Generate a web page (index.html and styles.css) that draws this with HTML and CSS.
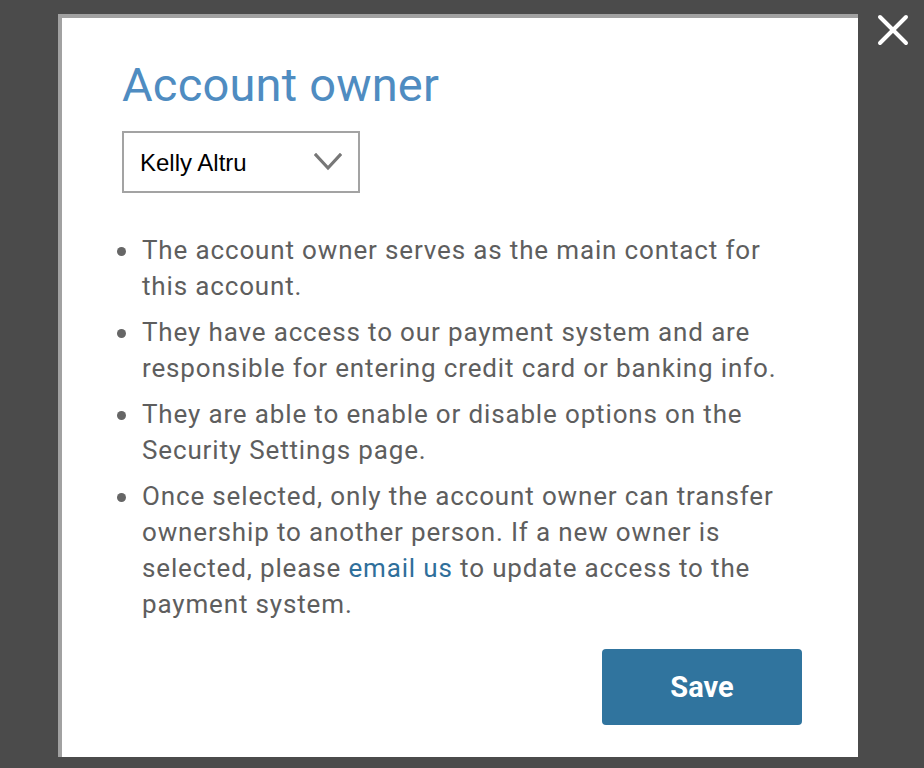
FILE: index.html
```html
<!DOCTYPE html>
<html lang="en">
<head>
<meta charset="utf-8">
<title>Account owner</title>
<link rel="stylesheet" href="styles.css">
</head>
<body>
<div class="overlay">
  <div class="modal">
    <h1 class="title">Account owner</h1>
    <div class="select">
      <span class="select-value">Kelly Altru</span>
      <svg class="chevron" width="28" height="18" viewBox="0 0 28 18" aria-hidden="true">
        <polyline points="2,2 14,15 26,2" fill="none" stroke="#777" stroke-width="3.2" stroke-linecap="square" stroke-linejoin="miter"/>
      </svg>
    </div>
    <ul class="info-list">
      <li><span class="item-text">The account owner serves as the main contact for this account.</span></li>
      <li><span class="item-text">They have access to our payment system and are responsible for entering credit card or banking info.</span></li>
      <li><span class="item-text">They are able to enable or disable options on the Security Settings page.</span></li>
      <li><span class="item-text">Once selected, only the account owner can transfer ownership to another person. If a new owner is selected, please <a class="link" href="#">email us</a> to update access to the payment system.</span></li>
    </ul>
    <div class="actions">
      <button class="save-btn" type="button">Save</button>
    </div>
  </div>
  <button class="close-btn" type="button" aria-label="Close">
    <svg width="32" height="32" viewBox="0 0 32 32" aria-hidden="true">
      <line x1="3" y1="3" x2="29" y2="29" stroke="#fff" stroke-width="4" stroke-linecap="round"/>
      <line x1="29" y1="3" x2="3" y2="29" stroke="#fff" stroke-width="4" stroke-linecap="round"/>
    </svg>
  </button>
</div>
</body>
</html>
```

FILE: styles.css
```css
html, body {
  margin: 0;
  padding: 0;
  background: #4b4b4b;
}

.overlay {
  position: relative;
  width: 924px;
  height: 768px;
  padding: 14px 0 0 58px;
  box-sizing: border-box;
  font-family: Roboto, "Liberation Sans", sans-serif;
}

.modal {
  width: 800px;
  height: 743px;
  box-sizing: border-box;
  background: #fff;
  border-top: 4px solid #a1a1a1;
  border-left: 4px solid #a1a1a1;
  padding: 39px 56px 0 60px;
  display: flex;
  flex-direction: column;
}

.title {
  margin: 0;
  font-size: 47px;
  line-height: 56px;
  font-weight: 400;
  color: #4f8cc1;
  letter-spacing: 0.2px;
}

.select {
  margin-top: 18px;
  width: 238px;
  height: 62px;
  box-sizing: border-box;
  border: 2px solid #a3a3a3;
  display: flex;
  align-items: center;
  justify-content: space-between;
  padding: 0 16px 0 16px;
}

.select-value {
  font-family: "Liberation Sans", Arial, sans-serif;
  font-size: 24px;
  color: #000;
  padding-top: 2px;
}

.chevron {
  display: block;
}

.info-list {
  list-style: none;
  margin: 39px 0 0 0;
  padding: 0;
  display: flex;
  flex-direction: column;
  gap: 10px;
}

.info-list li {
  display: flex;
  font-size: 26px;
  line-height: 36px;
  color: #5e5e5e;
  letter-spacing: 0.85px;
  margin-left: -5px;
}

.info-list li::before {
  content: "";
  flex: 0 0 9px;
  height: 9px;
  border-radius: 50%;
  background: #666;
  margin-top: 15px;
  margin-right: 16px;
}

.item-text {
  flex: 1 1 auto;
  min-width: 0;
}

.link {
  color: #2f6f9b;
  text-decoration: none;
}

.actions {
  display: flex;
  justify-content: flex-end;
  margin-top: 27px;
}

.save-btn {
  width: 200px;
  height: 76px;
  border: none;
  border-radius: 4px;
  background: #30749e;
  color: #fff;
  font-family: Roboto, "Liberation Sans", sans-serif;
  font-weight: 700;
  font-size: 29px;
  padding: 0;
  cursor: pointer;
}

.close-btn {
  position: absolute;
  left: 876px;
  top: 13px;
  width: 33px;
  height: 33px;
  padding: 0;
  border: none;
  background: transparent;
  display: flex;
  align-items: center;
  justify-content: center;
  cursor: pointer;
}

.close-btn svg {
  display: block;
}
```
